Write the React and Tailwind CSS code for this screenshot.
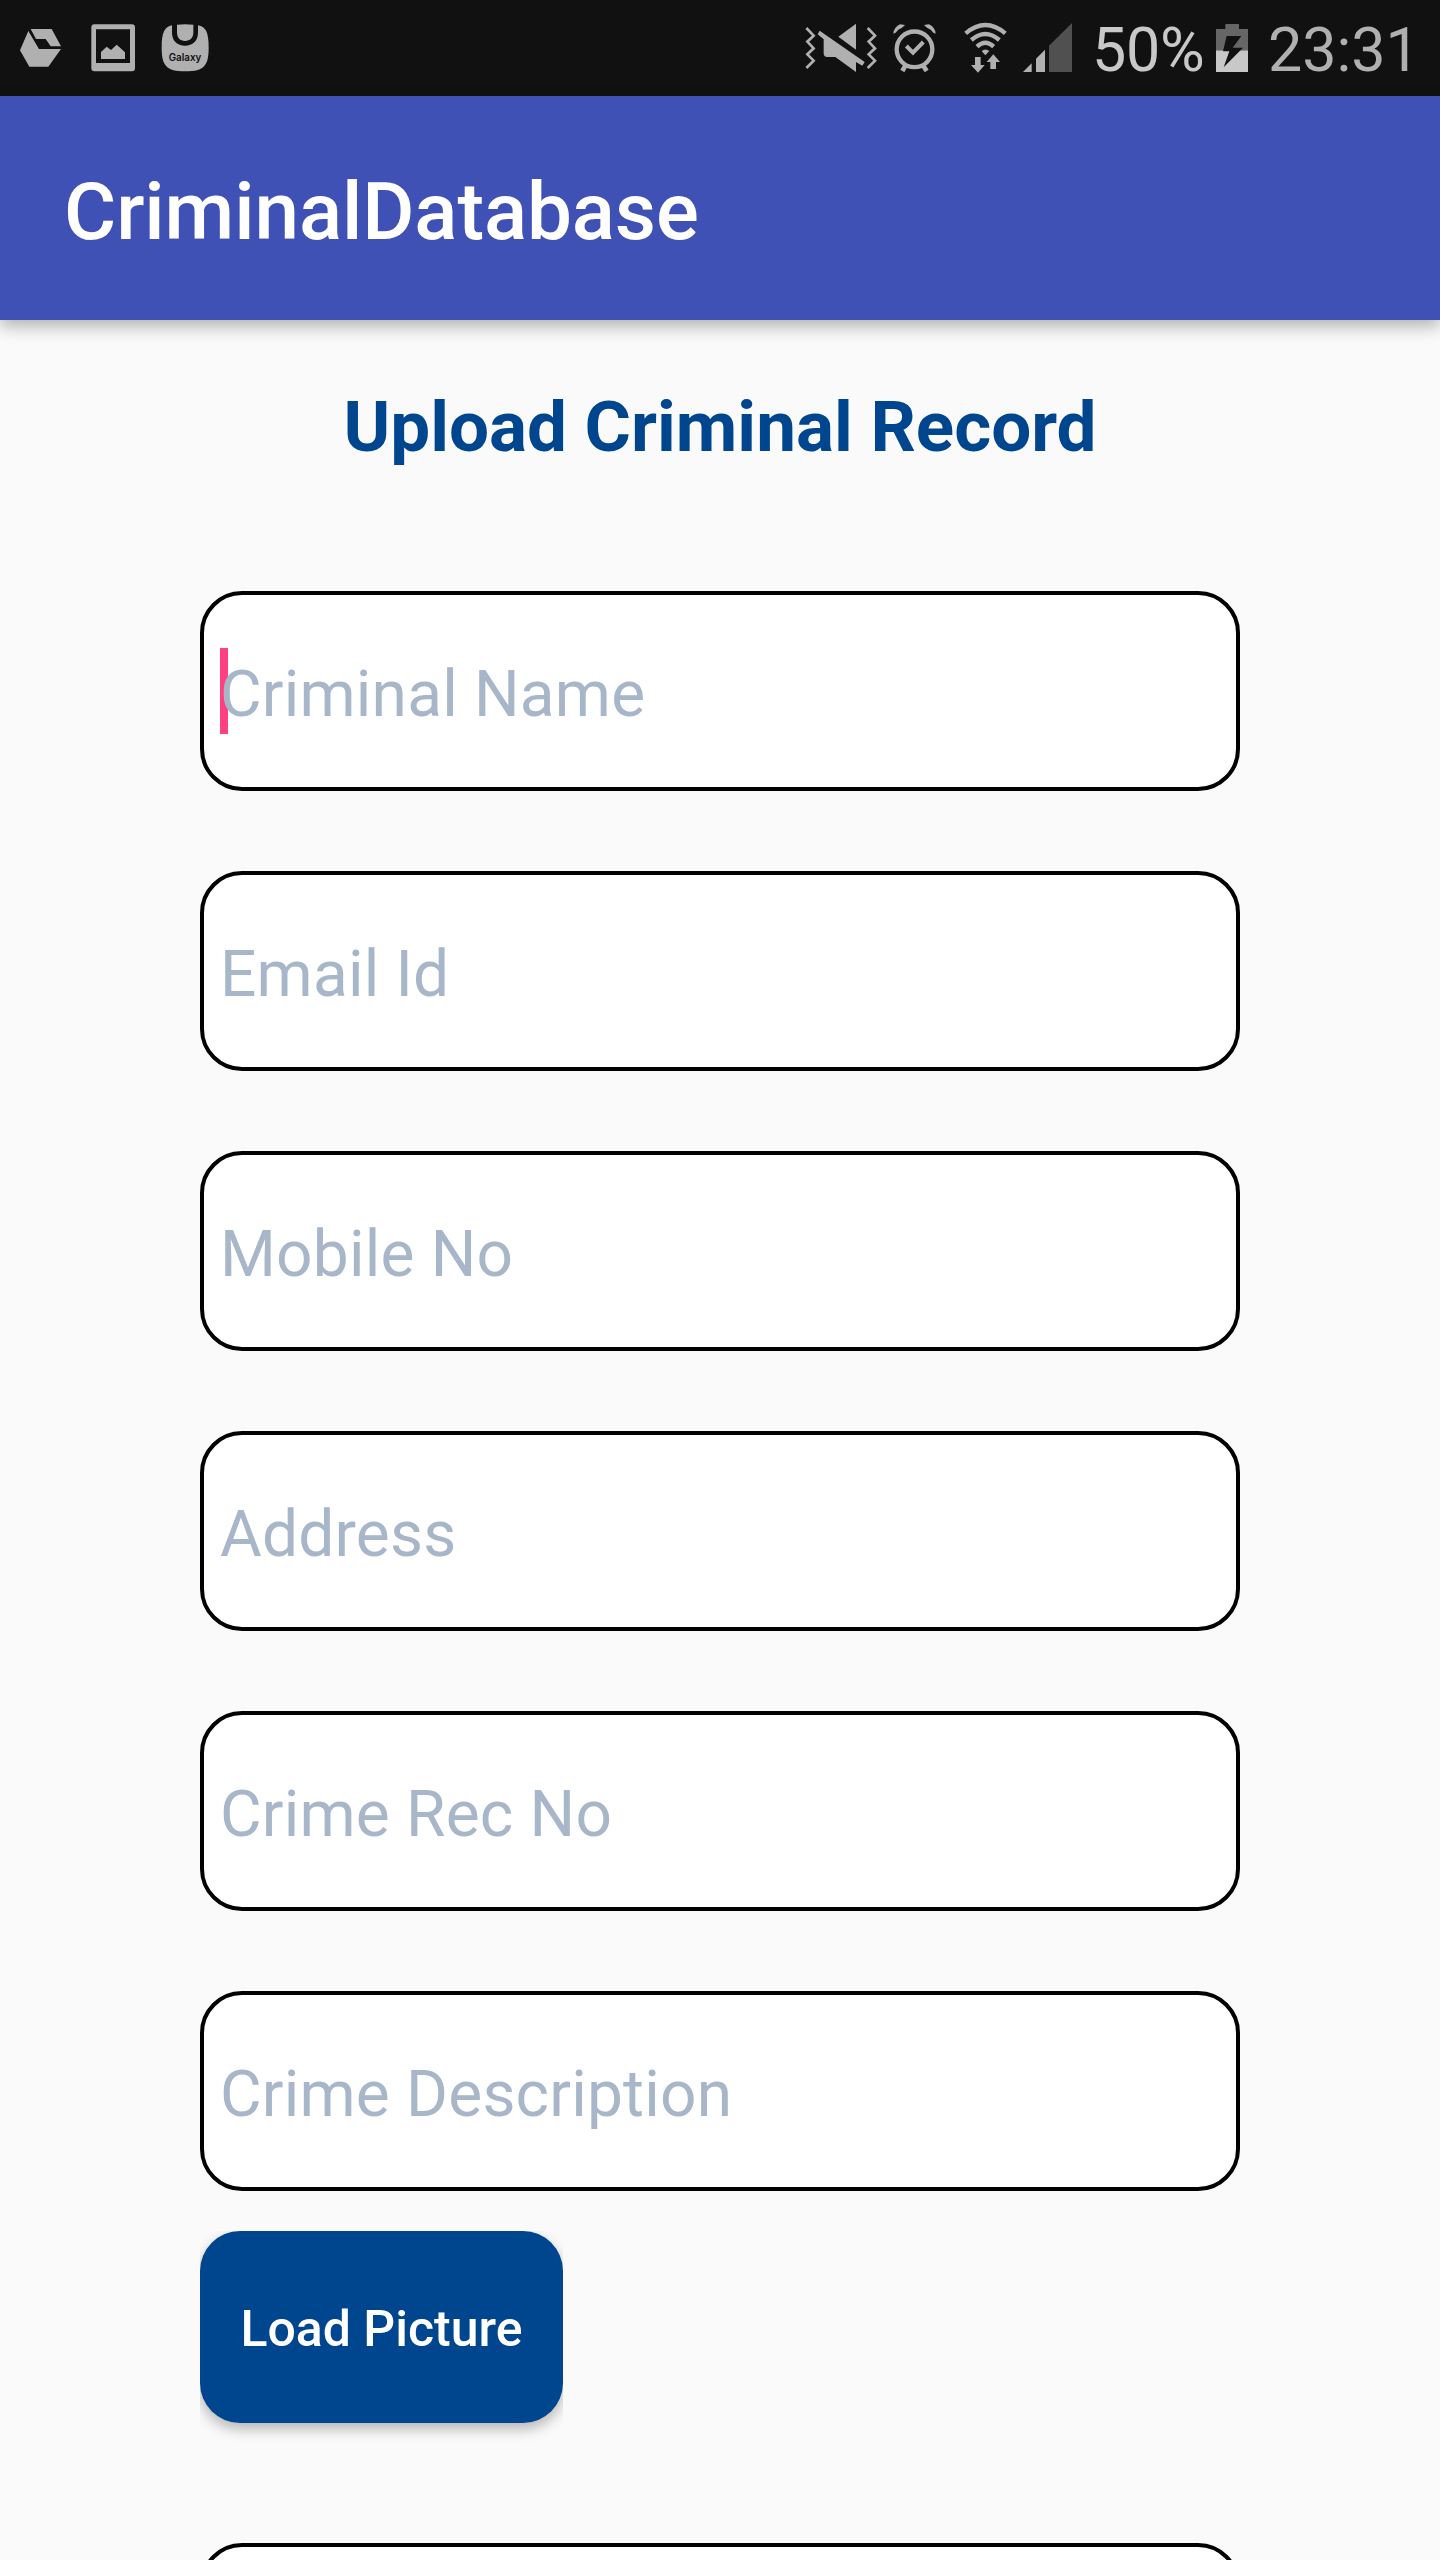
function DriveIcon() {
  return (
    <svg className="ml-5 h-[96px] w-[42px] shrink-0" viewBox="60 0 126 288" fill="#b0b0b0">
      <path d="M92 87H155L183 139H152L137 117H108Z" />
      <path d="M85 93L117 147H183L145 200H88L60 151Z" />
    </svg>
  );
}

function PhotoIcon() {
  return (
    <svg className="ml-[29px] h-[96px] w-[44px] shrink-0" viewBox="273 0 132 288" fill="#b0b0b0">
      <path
        fillRule="evenodd"
        d="M283 73H396Q405 73 405 82V205Q405 214 396 214H283Q274 214 274 205V82Q274 73 283 73ZM288 88V189H390V88Z"
      />
      <path d="M303 177V156L320 140L333 150L350 134L375 157V177Z" />
    </svg>
  );
}

function GalaxyIcon() {
  return (
    <svg className="ml-[26px] h-[96px] w-[48px] shrink-0" viewBox="483 0 144 288" fill="#b0b0b0">
      <path d="M516 76C494 80 485 98 485 143C485 195 498 214 556 214C614 214 626 195 626 143C626 98 618 80 594 76V98C594 122 578 137 555 137C532 137 516 122 516 98Z" />
      <path d="M531 74Q555 71 580 74V97C580 114 570 123 555 123C540 123 531 114 531 97Z" />
      <text
        x="506"
        y="184"
        textLength="98"
        lengthAdjust="spacingAndGlyphs"
        fill="#111111"
        fontFamily="Inter, Roboto, sans-serif"
        fontSize="29"
        fontWeight="600"
      >
        Galaxy
      </text>
    </svg>
  );
}

function MuteVibrateIcon() {
  return (
    <svg className="h-[96px] w-[72px] shrink-0" viewBox="75 0 216 288" fill="#b0b0b0">
      <g fill="none" stroke="#b0b0b0" strokeWidth="8">
        <path d="M79 84L101 107L82 125L101 145L82 163L101 182L79 204" />
        <path d="M263 84L285 107L266 125L285 145L266 163L285 182L263 204" />
      </g>
      <path d="M228 71V149L175 110Z" />
      <path d="M119 92L254 186L247 197L228 186V216L166 171H142Q131 171 131 160V118L113 103Z" />
    </svg>
  );
}

function AlarmIcon() {
  return (
    <svg className="ml-4 h-[96px] w-[43px] shrink-0" viewBox="339 0 129 288" fill="none" stroke="#b0b0b0">
      <circle cx="403.500" cy="148" r="53.500" strokeWidth="13" />
      <path d="M379 138L399 158L430 126" strokeWidth="12" />
      <path d="M376 197L367 213M430 197L440 213" strokeWidth="14" />
      <path d="M340 101Q341 83 360 73L375 75L366 83Q353 87 347 98ZM467 101Q466 83 447 73L432 75L441 83Q454 87 460 98Z" fill="#b0b0b0" stroke="none" />
    </svg>
  );
}

function WifiIcon() {
  return (
    <svg className="ml-[28px] h-[96px] w-[43px] shrink-0" viewBox="552 0 129 288" fill="none" stroke="#b0b0b0">
      <path d="M557 100Q616 50 676 100" strokeWidth="13" />
      <path d="M574 120Q616 84 658 120" strokeWidth="13" />
      <path d="M591 140Q616 117 641 140" strokeWidth="13" />
      <path d="M605 153Q616 144 628 153L616 166Z" fill="#b0b0b0" stroke="none" />
      <path d="M585 171H602V195H614L594 218L573 195H585ZM640 163L660 186H648V207H631V186H620Z" fill="#b0b0b0" stroke="none" />
    </svg>
  );
}

function SignalIcon() {
  return (
    <svg className="ml-4 h-[96px] w-[49px] shrink-0" viewBox="729 0 147 288" fill="#b0b0b0">
      <path d="M755 190V216H729Z" />
      <path d="M795 149V216H768V176Z" />
      <path d="M876 69V216H807V137Z" fill="#505050" />
    </svg>
  );
}

function BatteryIcon() {
  return (
    <svg className="h-[96px] w-[32px] shrink-0" viewBox="468 0 96 288">
      <path d="M496 72H537V87H564V151H468V87H496Z" fill="#666666" />
      <path d="M468 151H564V216H468Z" fill="#c8c8c8" />
      <path d="M500 108H544L518 143H549L491 202L508 154H489Z" fill="#111111" />
    </svg>
  );
}

function StatusBar() {
  return (
    <div className="flex h-24 shrink-0 items-center bg-[#111111] text-[61px] leading-[96px] text-[#b0b0b0]">
      <DriveIcon />
      <PhotoIcon />
      <GalaxyIcon />
      <div className="ml-auto flex w-[635px] items-center">
        <MuteVibrateIcon />
        <AlarmIcon />
        <WifiIcon />
        <SignalIcon />
        <span className="ml-[20px] w-[124px] whitespace-nowrap pt-[3px] tracking-[-0.3px] text-[#c8c8c8]">50%</span>
        <BatteryIcon />
        <span className="ml-[20px] whitespace-nowrap pt-[3px]">23:31</span>
      </div>
    </div>
  );
}

function Field({ label, focused }) {
  return (
    <div className="relative flex h-[200px] shrink-0 items-center rounded-[42px] border-4 border-black bg-white px-4">
      {focused && <span className="absolute top-[53px] left-4 h-[86px] w-2 bg-[#ff4081]" />}
      <input
        type="text"
        aria-label={label}
        placeholder={label}
        className="relative h-[86px] w-full bg-transparent pt-[7px] text-[64px] leading-[79px] tracking-[0.2px] text-black outline-none placeholder:text-[#a7b6c8] placeholder:opacity-100"
      />
    </div>
  );
}

const fields = ["Criminal Name", "Email Id", "Mobile No", "Address", "Crime Rec No", "Crime Description"];

export default function App() {
  return (
    <div className="flex h-[2560px] w-[1440px] flex-col overflow-hidden bg-[#fafafa] font-['Roboto',sans-serif]">
      <StatusBar />
      <header className="flex h-56 shrink-0 items-center bg-[#3f51b5] px-16 pt-2 shadow-[0_6px_16px_rgba(0,0,0,0.3)]">
        <h1 className="text-[80px] leading-[96px] font-medium tracking-[-0.1px] text-white">CriminalDatabase</h1>
      </header>
      <main className="flex flex-col px-[200px]">
        <h2 className="mt-[65px] text-center text-[71px] leading-[84px] font-bold whitespace-nowrap text-[#00468e]">
          Upload Criminal Record
        </h2>
        <form className="mt-[122px] flex flex-col">
          <div className="flex flex-col gap-20">
            {fields.map((label, i) => (
              <Field key={label} label={label} focused={i === 0} />
            ))}
          </div>
          <button
            type="button"
            className="mt-10 mb-[120px] h-48 w-[363px] shrink-0 rounded-[40px] bg-[#00468e] pt-1 text-[50px] font-medium text-white shadow-[0_6px_14px_rgba(0,0,0,0.28)] [clip-path:inset(0_0_-30px_0)]"
          >
            Load Picture
          </button>
          <Field label="" />
        </form>
      </main>
    </div>
  );
}
